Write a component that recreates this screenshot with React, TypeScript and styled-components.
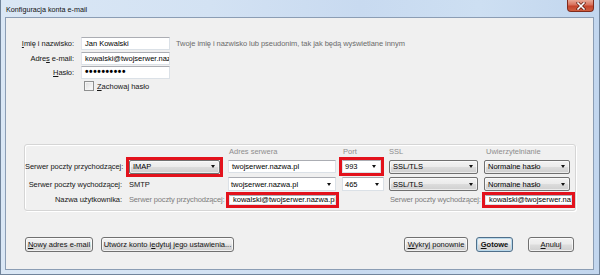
import React from 'react';
import styled, { createGlobalStyle } from 'styled-components';

const GlobalStyle = createGlobalStyle`
  html, body {
    margin: 0;
    padding: 0;
  }
  body {
    font-family: "Liberation Sans", Arial, sans-serif;
    font-size: 7.5px;
    color: #161616;
    background: #fff;
  }
`;

const Window = styled.div`
  width: 600px;
  height: 275px;
  box-sizing: border-box;
  display: flex;
  flex-direction: column;
  padding: 0 5px 4px 4px;
  border: 1px solid #71849b;
  border-top: none;
  background: linear-gradient(90deg, #dae7f5 0%, #d3e2f3 35%, #c8daf0 60%, #cddff2 80%, #c2d6ee 100%);
`;

const TitleBar = styled.div`
  height: 17px;
  display: flex;
  align-items: flex-start;
  justify-content: space-between;

  .title {
    padding: 5px 0 0 1px;
    color: #111;
    font-size: 7.2px;
  }
`;

const CloseButton = styled.div`
  width: 27px;
  height: 12px;
  box-sizing: border-box;
  display: flex;
  align-items: center;
  justify-content: center;
  border: 1px solid #7f2a1c;
  border-top: none;
  border-radius: 0 0 4px 4px;
  background: linear-gradient(180deg, #e8a896 0%, #d8705a 45%, #c4432b 55%, #cf5e3f 100%);
`;

const Client = styled.div`
  flex: 1;
  display: flex;
  flex-direction: column;
  background: #f0f0f0;
  border: 1px solid #8b9db4;
  padding-top: 19px;
`;

const IdentityGrid = styled.div`
  display: grid;
  grid-template-columns: 71px 89px auto;
  grid-template-rows: 13px 13px 13px 11px;
  column-gap: 4px;
  row-gap: 1.5px;
  align-items: center;

  .hint {
    color: #6b6b6b;
    padding-left: 2px;
    white-space: nowrap;
    letter-spacing: -0.05px;
  }
`;

const Label = styled.div<{ $muted?: boolean; $pad?: number; $right?: boolean }>`
  white-space: nowrap;
  color: ${(p) => (p.$muted ? '#7d7d7d' : '#161616')};
  text-align: ${(p) => (p.$right ? 'right' : 'left')};
  padding-left: ${(p) => (p.$right ? 0 : p.$pad ?? 0)}px;
  padding-right: ${(p) => (p.$right ? 3 : 0)}px;
  letter-spacing: ${(p) => (p.$muted ? '-0.15px' : '-0.05px')};
`;

const ColumnHead = styled.div<{ $pad: number }>`
  color: #8e8e8e;
  padding-left: ${(p) => p.$pad}px;
  white-space: nowrap;
`;

const Key = styled.span`
  text-decoration: underline;
`;

const TextInput = styled.div<{ $width?: number; $height?: number; $ml?: number }>`
  box-sizing: border-box;
  width: ${(p) => (p.$width ? `${p.$width}px` : '100%')};
  height: ${(p) => p.$height ?? 13}px;
  margin-left: ${(p) => p.$ml ?? 0}px;
  display: flex;
  align-items: center;
  padding-left: 3px;
  overflow: hidden;
  white-space: nowrap;
  background: #fff;
  border: 1px solid #dbe1e7;
  border-top-color: #abadb3;
  border-left-color: #e2e3ea;
  color: #000;
`;

const Dots = styled.span`
  font-size: 10px;
  font-weight: bold;
  letter-spacing: 0.6px;
  line-height: 1;
  margin-top: -1px;
`;

const Arrow = styled.span`
  margin-left: auto;
  margin-right: 4px;
  width: 0;
  height: 0;
  border-left: 2.5px solid transparent;
  border-right: 2.5px solid transparent;
  border-top: 3px solid #111;
`;

const Combo = styled.div<{ $width: number; $ml?: number; $height?: number }>`
  box-sizing: border-box;
  width: ${(p) => p.$width}px;
  height: ${(p) => p.$height ?? 14}px;
  margin-left: ${(p) => p.$ml ?? 0}px;
  display: flex;
  align-items: center;
  padding-left: 2px;
  white-space: nowrap;
  background: #fff;
  border: 1px solid #dbe1e7;
  border-top-color: #abadb3;
  color: #000;
`;

const Select = styled.div<{ $width?: number; $ml?: number; $height?: number }>`
  box-sizing: border-box;
  width: ${(p) => (p.$width ? `${p.$width}px` : '100%')};
  height: ${(p) => p.$height ?? 14}px;
  margin-left: ${(p) => p.$ml ?? 0}px;
  display: flex;
  align-items: center;
  padding-left: 3px;
  white-space: nowrap;
  color: #000;
  border: 1px solid #707070;
  border-radius: 2px;
  background: linear-gradient(180deg, #f3f3f3 0%, #ebebeb 48%, #dcdcdc 52%, #cfcfcf 100%);
  box-shadow: inset 0 0 0 1px rgba(255, 255, 255, 0.6);
`;

const Highlight = styled.div<{ $width: number; $ml?: number; $height: number }>`
  box-sizing: border-box;
  width: ${(p) => p.$width}px;
  height: ${(p) => p.$height}px;
  margin-left: ${(p) => p.$ml ?? 0}px;
  border: 3px solid #e3121c;
  display: flex;
  align-items: stretch;
`;

const CheckRow = styled.div`
  grid-column: 2 / 4;
  display: flex;
  align-items: center;
  gap: 3px;
  padding-left: 3px;
`;

const CheckBox = styled.div`
  width: 10px;
  height: 10px;
  box-sizing: border-box;
  border: 1px solid #8e8f8f;
  background: linear-gradient(135deg, #dcdcdc 0%, #f4f4f4 70%, #fbfbfb 100%);
  box-shadow: inset 0 0 0 1px #f4f4f4;
`;

const GroupBox = styled.div`
  margin: 52px 17px 0 18px;
  height: 67px;
  box-sizing: border-box;
  padding: 1px 0 2px 0;
  border: 1px solid #d5d5d5;
  border-radius: 3px;
  box-shadow: inset 1px 1px 0 #fff, 1px 1px 0 #fff;
  display: grid;
  grid-template-columns: 100px 100px 114px 47px 95px 95px;
  grid-template-rows: 11px 20px 15px 16px;
  align-items: center;
`;

const ButtonRow = styled.div`
  margin: 26px 19px 0 19px;
  display: flex;
  align-items: center;
  gap: 8px;

  .spacer {
    flex: 1;
  }
`;

const Button = styled.div<{ $width: number; $bold?: boolean; $gapLeft?: number }>`
  box-sizing: border-box;
  width: ${(p) => p.$width}px;
  height: 15px;
  margin-left: ${(p) => p.$gapLeft ?? 0}px;
  display: flex;
  align-items: center;
  justify-content: center;
  white-space: nowrap;
  color: #111;
  font-weight: ${(p) => (p.$bold ? 'bold' : 'normal')};
  border: 1px solid ${(p) => (p.$bold ? '#4f6f8a' : '#707070')};
  border-radius: 3px;
  background: linear-gradient(180deg, #f2f2f2 0%, #ebebeb 48%, #dddddd 52%, #cfcfcf 100%);
  box-shadow: inset 0 0 0 1px ${(p) => (p.$bold ? '#b9d9ec' : 'rgba(255, 255, 255, 0.7)')};
`;

const CloseIcon = () => (
  <svg width="10" height="8" viewBox="0 0 10 8">
    <path d="M2 1 L8 7 M8 1 L2 7" stroke="#5a1a10" strokeWidth="3" strokeLinecap="square" />
    <path d="M2 1 L8 7 M8 1 L2 7" stroke="#ffffff" strokeWidth="1.6" strokeLinecap="square" />
  </svg>
);

const App = () => {
  return (
    <>
      <GlobalStyle />
      <Window>
        <TitleBar>
          <div className="title">Konfiguracja konta e-mail</div>
          <CloseButton>
            <CloseIcon />
          </CloseButton>
        </TitleBar>
        <Client>
          <IdentityGrid>
            <Label $right>
              <Key>I</Key>mię i nazwisko:
            </Label>
            <TextInput>Jan Kowalski</TextInput>
            <div className="hint">Twoje imię i nazwisko lub pseudonim, tak jak będą wyświetlane innym</div>

            <Label $right>
              Adre<Key>s</Key> e-mail:
            </Label>
            <TextInput>kowalski@twojserwer.nazwa.pl</TextInput>
            <div />

            <Label $right>
              <Key>H</Key>asło:
            </Label>
            <TextInput>
              <Dots>••••••••••</Dots>
            </TextInput>
            <div />

            <div />
            <CheckRow>
              <CheckBox />
              <span>
                <Key>Z</Key>achowaj hasło
              </span>
            </CheckRow>
          </IdentityGrid>

          <GroupBox>
            <div />
            <div />
            <ColumnHead $pad={4}>Adres serwera</ColumnHead>
            <ColumnHead $pad={4}>Port</ColumnHead>
            <ColumnHead $pad={3}>SSL</ColumnHead>
            <ColumnHead $pad={5}>Uwierzytelnianie</ColumnHead>

            <Label $right>Serwer poczty przychodzącej:</Label>
            <Highlight $width={97} $height={20} $ml={1}>
              <Select>
                IMAP
                <Arrow />
              </Select>
            </Highlight>
            <TextInput $width={108} $ml={3}>
              twojserwer.nazwa.pl
            </TextInput>
            <Highlight $width={45} $height={19}>
              <Combo $width={39} $height={13}>
                993
                <Arrow />
              </Combo>
            </Highlight>
            <Select $width={89} $ml={3}>
              SSL/TLS
              <Arrow />
            </Select>
            <Select $width={86} $ml={3}>
              Normalne hasło
              <Arrow />
            </Select>

            <Label $right>Serwer poczty wychodzącej:</Label>
            <Label $pad={4}>SMTP</Label>
            <Combo $width={108} $ml={3}>
              twojserwer.nazwa.pl
              <Arrow />
            </Combo>
            <Combo $width={42} $ml={3}>
              465
              <Arrow />
            </Combo>
            <Select $width={89} $ml={3}>
              SSL/TLS
              <Arrow />
            </Select>
            <Select $width={86} $ml={3}>
              Normalne hasło
              <Arrow />
            </Select>

            <Label $right>Nazwa użytkownika:</Label>
            <Label $muted $pad={4}>
              Serwer poczty przychodzącej:
            </Label>
            <Highlight $width={113} $height={16} $ml={1}>
              <TextInput $height={10}>kowalski@twojserwer.nazwa.pl</TextInput>
            </Highlight>
            <div />
            <Label $muted $pad={4}>
              Serwer poczty wychodzącej:
            </Label>
            <Highlight $width={93} $height={16} $ml={1}>
              <TextInput $height={10}>kowalski@twojserwer.nazwa.pl</TextInput>
            </Highlight>
          </GroupBox>

          <ButtonRow>
            <Button $width={68}>
              <Key>N</Key>owy adres e-mail
            </Button>
            <Button $width={133}>
              Utwórz konto i <Key>e</Key>dytuj jego ustawienia...
            </Button>
            <div className="spacer" />
            <Button $width={64}>
              <Key>W</Key>ykryj ponownie
            </Button>
            <Button $width={37} $bold>
              <Key>G</Key>otowe
            </Button>
            <Button $width={46} $gapLeft={7}>
              <Key>A</Key>nuluj
            </Button>
          </ButtonRow>
        </Client>
      </Window>
    </>
  );
};

export default App;
